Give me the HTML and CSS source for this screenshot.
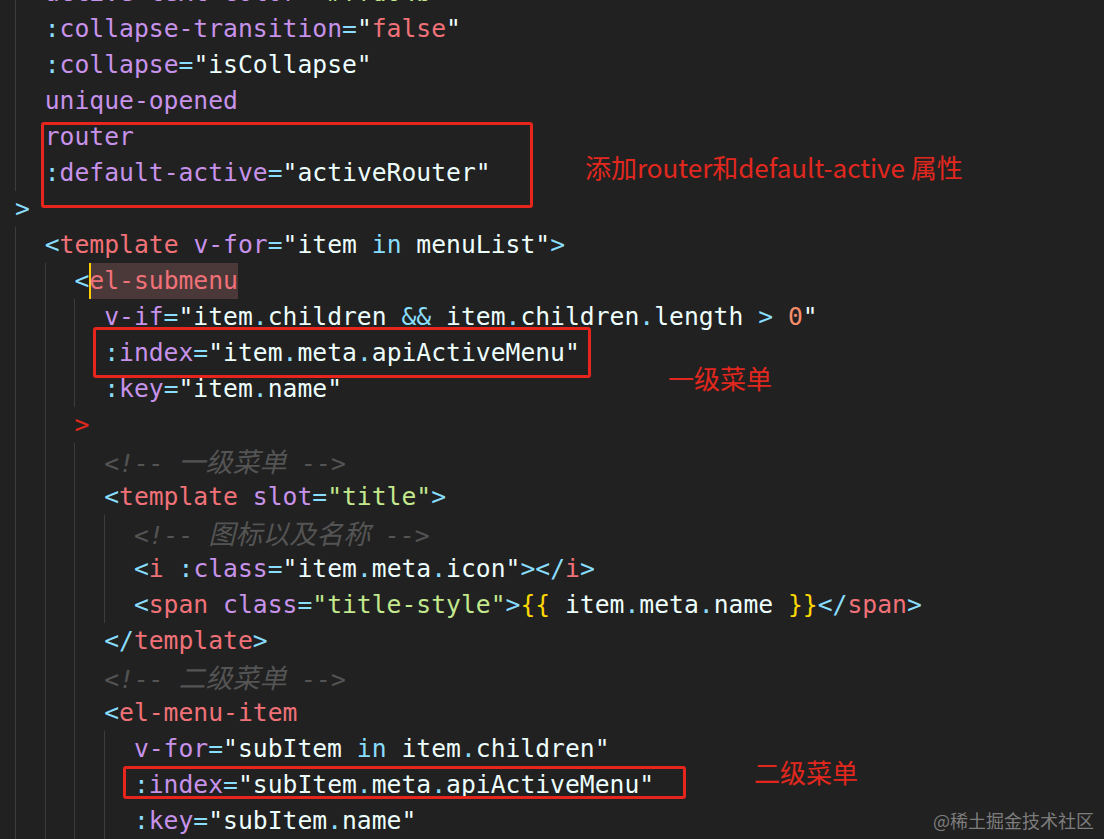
FILE: index.html
```html
<!DOCTYPE html>
<html lang="zh-CN">
<head>
<meta charset="utf-8">
<title>el-menu code</title>
<link rel="stylesheet" href="styles.css">
</head>
<body>
<div class="editor">
  <div class="code">
    <div class="line"><span class="ig"></span><span class="tx"><span class="a">active-text-color</span><span class="p">=</span><span class="s">"#ffd04b"</span></span></div>
    <div class="line"><span class="ig"></span><span class="tx"><span class="p">:</span><span class="a">collapse-transition</span><span class="p">=</span><span class="v">"</span><span class="k">false</span><span class="v">"</span></span></div>
    <div class="line"><span class="ig"></span><span class="tx"><span class="p">:</span><span class="a">collapse</span><span class="p">=</span><span class="v">"isCollapse"</span></span></div>
    <div class="line"><span class="ig"></span><span class="tx"><span class="a">unique-opened</span></span></div>
    <div class="line"><span class="ig"></span><span class="tx"><span class="a">router</span></span></div>
    <div class="line"><span class="ig"></span><span class="tx"><span class="p">:</span><span class="a">default-active</span><span class="p">=</span><span class="v">"activeRouter"</span></span></div>
    <div class="line"><span class="tx"><span class="p">&gt;</span></span></div>
    <div class="line"><span class="ig"></span><span class="tx"><span class="p">&lt;</span><span class="t">template</span> <span class="a">v-for</span><span class="p">=</span><span class="v">"item</span><span class="p"> in </span><span class="v">menuList"</span><span class="p">&gt;</span></span></div>
    <div class="line"><span class="ig"></span><span class="ig"></span><span class="tx"><span class="p">&lt;</span><span class="t sel">el-submenu</span></span></div>
    <div class="line"><span class="ig"></span><span class="ig"></span><span class="ig"></span><span class="tx"><span class="a">v-if</span><span class="p">=</span><span class="v">"item</span><span class="p">.</span><span class="v">children</span><span class="p"> &amp;&amp; </span><span class="v">item</span><span class="p">.</span><span class="v">children</span><span class="p">.</span><span class="v">length</span><span class="p"> &gt; </span><span class="n">0</span><span class="v">"</span></span></div>
    <div class="line"><span class="ig"></span><span class="ig"></span><span class="ig"></span><span class="tx"><span class="p">:</span><span class="a">index</span><span class="p">=</span><span class="v">"item</span><span class="p">.</span><span class="v">meta</span><span class="p">.</span><span class="v">apiActiveMenu"</span></span></div>
    <div class="line"><span class="ig"></span><span class="ig"></span><span class="ig"></span><span class="tx"><span class="p">:</span><span class="a">key</span><span class="p">=</span><span class="v">"item</span><span class="p">.</span><span class="v">name"</span></span></div>
    <div class="line"><span class="ig"></span><span class="ig"></span><span class="tx"><span class="err">&gt;</span></span></div>
    <div class="line"><span class="ig"></span><span class="ig"></span><span class="ig"></span><span class="tx"><span class="c">&lt;!-- <span class="cjk">一级菜单</span> --&gt;</span></span></div>
    <div class="line"><span class="ig"></span><span class="ig"></span><span class="ig"></span><span class="tx"><span class="p">&lt;</span><span class="t">template</span> <span class="a">slot</span><span class="p">=</span><span class="s">"title"</span><span class="p">&gt;</span></span></div>
    <div class="line"><span class="ig"></span><span class="ig"></span><span class="ig"></span><span class="ig"></span><span class="tx"><span class="c">&lt;!-- <span class="cjk">图标以及名称</span> --&gt;</span></span></div>
    <div class="line"><span class="ig"></span><span class="ig"></span><span class="ig"></span><span class="ig"></span><span class="tx"><span class="p">&lt;</span><span class="t">i</span> <span class="p">:</span><span class="a">class</span><span class="p">=</span><span class="v">"item</span><span class="p">.</span><span class="v">meta</span><span class="p">.</span><span class="v">icon"</span><span class="p">&gt;&lt;/</span><span class="t">i</span><span class="p">&gt;</span></span></div>
    <div class="line"><span class="ig"></span><span class="ig"></span><span class="ig"></span><span class="ig"></span><span class="tx"><span class="p">&lt;</span><span class="t">span</span> <span class="a">class</span><span class="p">=</span><span class="s">"title-style"</span><span class="p">&gt;</span><span class="y">{{</span><span class="v"> item</span><span class="p">.</span><span class="v">meta</span><span class="p">.</span><span class="v">name </span><span class="y">}}</span><span class="p">&lt;/</span><span class="t">span</span><span class="p">&gt;</span></span></div>
    <div class="line"><span class="ig"></span><span class="ig"></span><span class="ig"></span><span class="tx"><span class="p">&lt;/</span><span class="t">template</span><span class="p">&gt;</span></span></div>
    <div class="line"><span class="ig"></span><span class="ig"></span><span class="ig"></span><span class="tx"><span class="c">&lt;!-- <span class="cjk">二级菜单</span> --&gt;</span></span></div>
    <div class="line"><span class="ig"></span><span class="ig"></span><span class="ig"></span><span class="tx"><span class="p">&lt;</span><span class="t">el-menu-item</span></span></div>
    <div class="line"><span class="ig"></span><span class="ig"></span><span class="ig"></span><span class="ig"></span><span class="tx"><span class="a">v-for</span><span class="p">=</span><span class="v">"subItem</span><span class="p"> in </span><span class="v">item</span><span class="p">.</span><span class="v">children"</span></span></div>
    <div class="line"><span class="ig"></span><span class="ig"></span><span class="ig"></span><span class="ig"></span><span class="tx"><span class="p">:</span><span class="a">index</span><span class="p">=</span><span class="v">"subItem</span><span class="p">.</span><span class="v">meta</span><span class="p">.</span><span class="v">apiActiveMenu"</span></span></div>
    <div class="line"><span class="ig"></span><span class="ig"></span><span class="ig"></span><span class="ig"></span><span class="tx"><span class="p">:</span><span class="a">key</span><span class="p">=</span><span class="v">"subItem</span><span class="p">.</span><span class="v">name"</span></span></div>
  </div>

  <div class="box box-router"></div>
  <div class="box box-index1"></div>
  <div class="box box-index2"></div>

  <div class="note note-router">添加router和default-active 属性</div>
  <div class="note note-lv1">一级菜单</div>
  <div class="note note-lv2">二级菜单</div>
  <div class="watermark">@稀土掘金技术社区</div>
</div>
</body>
</html>
```

FILE: styles.css
```css
html, body {
  margin: 0;
  padding: 0;
  background: #212121;
}

body {
  width: 1104px;
  height: 839px;
  overflow: hidden;
}

.editor {
  position: relative;
  width: 1104px;
  height: 839px;
  overflow: hidden;
  background: #212121;
}

.code {
  margin-top: -25px;
  padding-left: 15px;
  font-family: "DejaVu Sans Mono", "Liberation Mono", "Noto Sans CJK SC", monospace;
  font-size: 24.7px;
  color: #eeffff;
}

.line {
  display: flex;
  height: 36px;
  line-height: 36px;
}

.ig {
  flex: 0 0 2ch;
  width: 2ch;
  height: 36px;
  box-sizing: border-box;
  border-left: 1px solid #3c3c3c;
}

.tx {
  white-space: pre;
}

.p { color: #89ddff; }
.a { color: #c792ea; }
.t { color: #f07178; }
.v { color: #eeffff; }
.s { color: #c3e88d; }
.n { color: #f78c6c; }
.k { color: #f07178; }
.y { color: #ffd700; }
.err { color: #e2271d; }
.c {
  color: #545454;
  font-style: italic;
}

.cjk {
  font-family: "Noto Sans CJK SC", sans-serif;
  font-size: 27px;
}

.sel {
  display: inline-block;
  height: 36px;
  vertical-align: top;
  background: #4b3838;
  box-shadow: inset 2px 0 0 #ffcc00;
}

.box {
  position: absolute;
  box-sizing: border-box;
  border: 3px solid #e8251c;
  border-radius: 3px;
}

.box-router {
  left: 41px;
  top: 122px;
  width: 492px;
  height: 86px;
}

.box-index1 {
  left: 93px;
  top: 327px;
  width: 498px;
  height: 51px;
}

.box-index2 {
  left: 123px;
  top: 766px;
  width: 563px;
  height: 33px;
}

.note {
  position: absolute;
  font-family: "Noto Sans CJK SC", sans-serif;
  font-size: 26px;
  line-height: 26px;
  color: #e2281e;
  white-space: nowrap;
}

.note-router {
  left: 585px;
  top: 154px;
}

.note-lv1 {
  left: 668px;
  top: 365px;
}

.note-lv2 {
  left: 754px;
  top: 759px;
}

.watermark {
  position: absolute;
  left: 933px;
  top: 810px;
  font-family: "Noto Sans CJK SC", sans-serif;
  font-size: 18px;
  line-height: 20px;
  color: #7d7d7d;
  white-space: nowrap;
}
```
